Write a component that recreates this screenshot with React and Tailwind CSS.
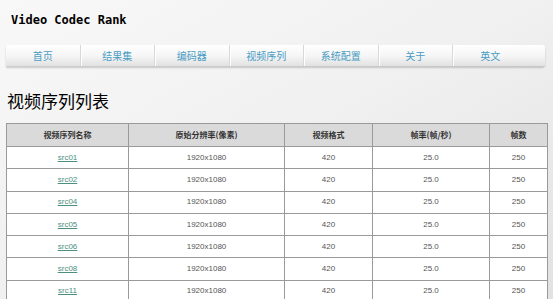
const navItems = ["首页", "结果集", "编码器", "视频序列", "系统配置", "关于", "英文"];
const rows = ["src01", "src02", "src04", "src05", "src06", "src08", "src11"];
const columns = [
  ["视频序列名称", "w-[122px]"],
  ["原始分辨率(像素)", "w-[156px]"],
  ["视频格式", "w-[88px]"],
  ["帧率(帧/秒)", "w-[117px]"],
  ["帧数", "w-[58px]"],
];

export default function App() {
  return (
    <div className="w-[553px] h-[299px] overflow-hidden bg-gradient-to-br from-[#f8f8f8] via-[#f0f0f0] to-[#e2e2e2] font-['Noto_Sans_CJK_SC',sans-serif]">
      {/* Site title */}
      <div className="pl-[11px] pt-[13px] h-[45px] text-[12px] leading-[15px] font-bold text-black font-['DejaVu_Sans_Mono','Liberation_Mono',monospace]">
        Video Codec Rank
      </div>

      {/* Nav bar */}
      <div className="ml-[6px] w-[539px] h-[21px] flex rounded-r-[3px] bg-gradient-to-b from-white via-[#f6f6f6] to-[#e2e2e2] shadow-[0_2px_2px_rgba(0,0,0,0.18)]">
        {navItems.map((item) => (
          <div
            key={item}
            className="w-[74.5px] h-full flex items-center justify-center text-[10px] text-[#4a9cc4] border-r border-[#d8d8d8] shadow-[1px_0_0_#ffffff] last:border-r-0 last:shadow-none"
          >
            {item}
          </div>
        ))}
      </div>

      {/* Heading */}
      <h1 className="ml-[7px] mt-[25px] h-[32px] text-[17px] leading-[20px] text-black font-normal">
        视频序列列表
      </h1>

      {/* Table */}
      <table className="ml-[6px] w-[541px] border-collapse border border-[#9a9a9a] table-fixed">
        <thead>
          <tr className="bg-[#dadada]">
            {columns.map(([label, w]) => (
              <th
                key={label}
                className={`${w} h-[23px] p-0 border border-[#9a9a9a] text-[8px] font-bold text-[#333]`}
              >
                {label}
              </th>
            ))}
          </tr>
        </thead>
        <tbody className="font-['Liberation_Sans',sans-serif] text-[8px] text-[#555]">
          {rows.map((name) => (
            <tr key={name} className="bg-white">
              <td className="h-[22.3px] p-0 border border-[#9a9a9a] text-center">
                <a href="#" className="underline text-[#4a8f80]">
                  {name}
                </a>
              </td>
              <td className="p-0 border border-[#9a9a9a] text-center">1920x1080</td>
              <td className="p-0 border border-[#9a9a9a] text-center">420</td>
              <td className="p-0 border border-[#9a9a9a] text-center">25.0</td>
              <td className="p-0 border border-[#9a9a9a] text-center">250</td>
            </tr>
          ))}
        </tbody>
      </table>
    </div>
  );
}
